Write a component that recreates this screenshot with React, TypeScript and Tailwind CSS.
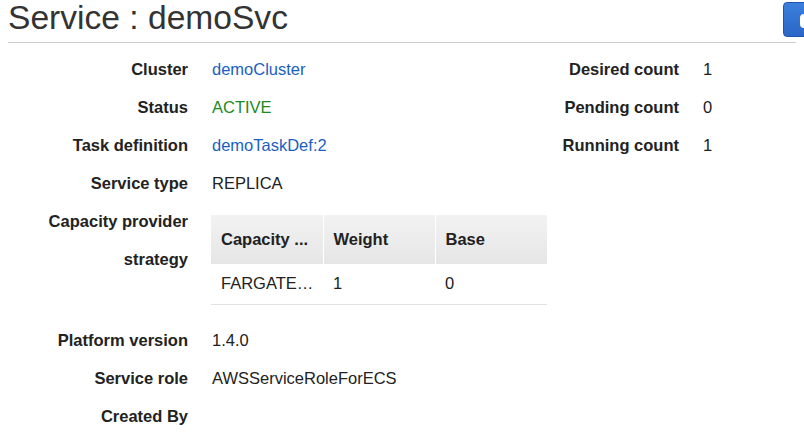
import React from 'react'

const LEFT: { label: string; value: React.ReactNode }[] = [
  { label: 'Cluster', value: <a className="text-[#1b5fc1]">demoCluster</a> },
  { label: 'Status', value: <span className="text-[#1d8a1d]">ACTIVE</span> },
  { label: 'Task definition', value: <a className="text-[#1b5fc1]">demoTaskDef:2</a> },
  { label: 'Service type', value: 'REPLICA' },
]

const BOTTOM: { label: string; value: string }[] = [
  { label: 'Platform version', value: '1.4.0' },
  { label: 'Service role', value: 'AWSServiceRoleForECS' },
  { label: 'Created By', value: '' },
]

const RIGHT: { label: string; value: string }[] = [
  { label: 'Desired count', value: '1' },
  { label: 'Pending count', value: '0' },
  { label: 'Running count', value: '1' },
]

function Row({ label, value, labelW }: { label: string; value: React.ReactNode; labelW: string }) {
  return (
    <div className="flex h-[38px] items-center">
      <div className={`${labelW} shrink-0 text-right font-bold`}>{label}</div>
      <div className="pl-6">{value}</div>
    </div>
  )
}

export default function App() {
  return (
    <div className="h-[440px] w-[804px] overflow-hidden bg-white text-[16.5px] text-[#222]" style={{ fontFamily: '"Liberation Sans", Arial, sans-serif' }}>
      <div className="relative flex h-[43px] items-start border-b border-[#cccccc] mx-2">
        <h1 className="pt-[1px] text-[33.6px] leading-[34px] text-[#333]">Service : demoSvc</h1>
        <div className="absolute left-[775px] top-[2px] h-[35px] w-[40px] rounded-[4px] border border-[#1f55b0] bg-gradient-to-b from-[#3b7fdc] to-[#2b66c6]">
          <div className="absolute left-[16px] top-[11px] h-[14px] w-[8px] rounded-l-[4px] bg-white" />
        </div>
      </div>

      <div className="mt-[7px] flex">
        <div className="w-[500px]">
          {LEFT.map(r => (
            <Row key={r.label} label={r.label} value={r.value} labelW="w-[188px]" />
          ))}
          <div className="flex h-[119px]">
            <div className="w-[188px] shrink-0 text-right font-bold leading-[38px]">
              Capacity provider
              <br />
              strategy
            </div>
            <div className="pl-[23px] pt-[13px]">
              <table className="w-[336px] border-collapse text-left">
                <thead>
                  <tr className="h-[49px] bg-gradient-to-b from-[#f2f2f2] to-[#e6e6e6]">
                    <th className="w-[112px] border-r border-white pl-[10px] font-bold">Capacity ...</th>
                    <th className="w-[112px] border-r border-white pl-[10px] font-bold">Weight</th>
                    <th className="w-[112px] pl-[10px] font-bold">Base</th>
                  </tr>
                </thead>
                <tbody>
                  <tr className="h-[40px] border-b border-[#e2e2e2]">
                    <td className="pl-[10px]">FARGATE…</td>
                    <td className="pl-[10px]">1</td>
                    <td className="pl-[10px]">0</td>
                  </tr>
                </tbody>
              </table>
            </div>
          </div>
          {BOTTOM.map(r => (
            <Row key={r.label} label={r.label} value={r.value} labelW="w-[188px]" />
          ))}
        </div>
        <div>
          {RIGHT.map(r => (
            <Row key={r.label} label={r.label} value={r.value} labelW="w-[179px]" />
          ))}
        </div>
      </div>
    </div>
  )
}
